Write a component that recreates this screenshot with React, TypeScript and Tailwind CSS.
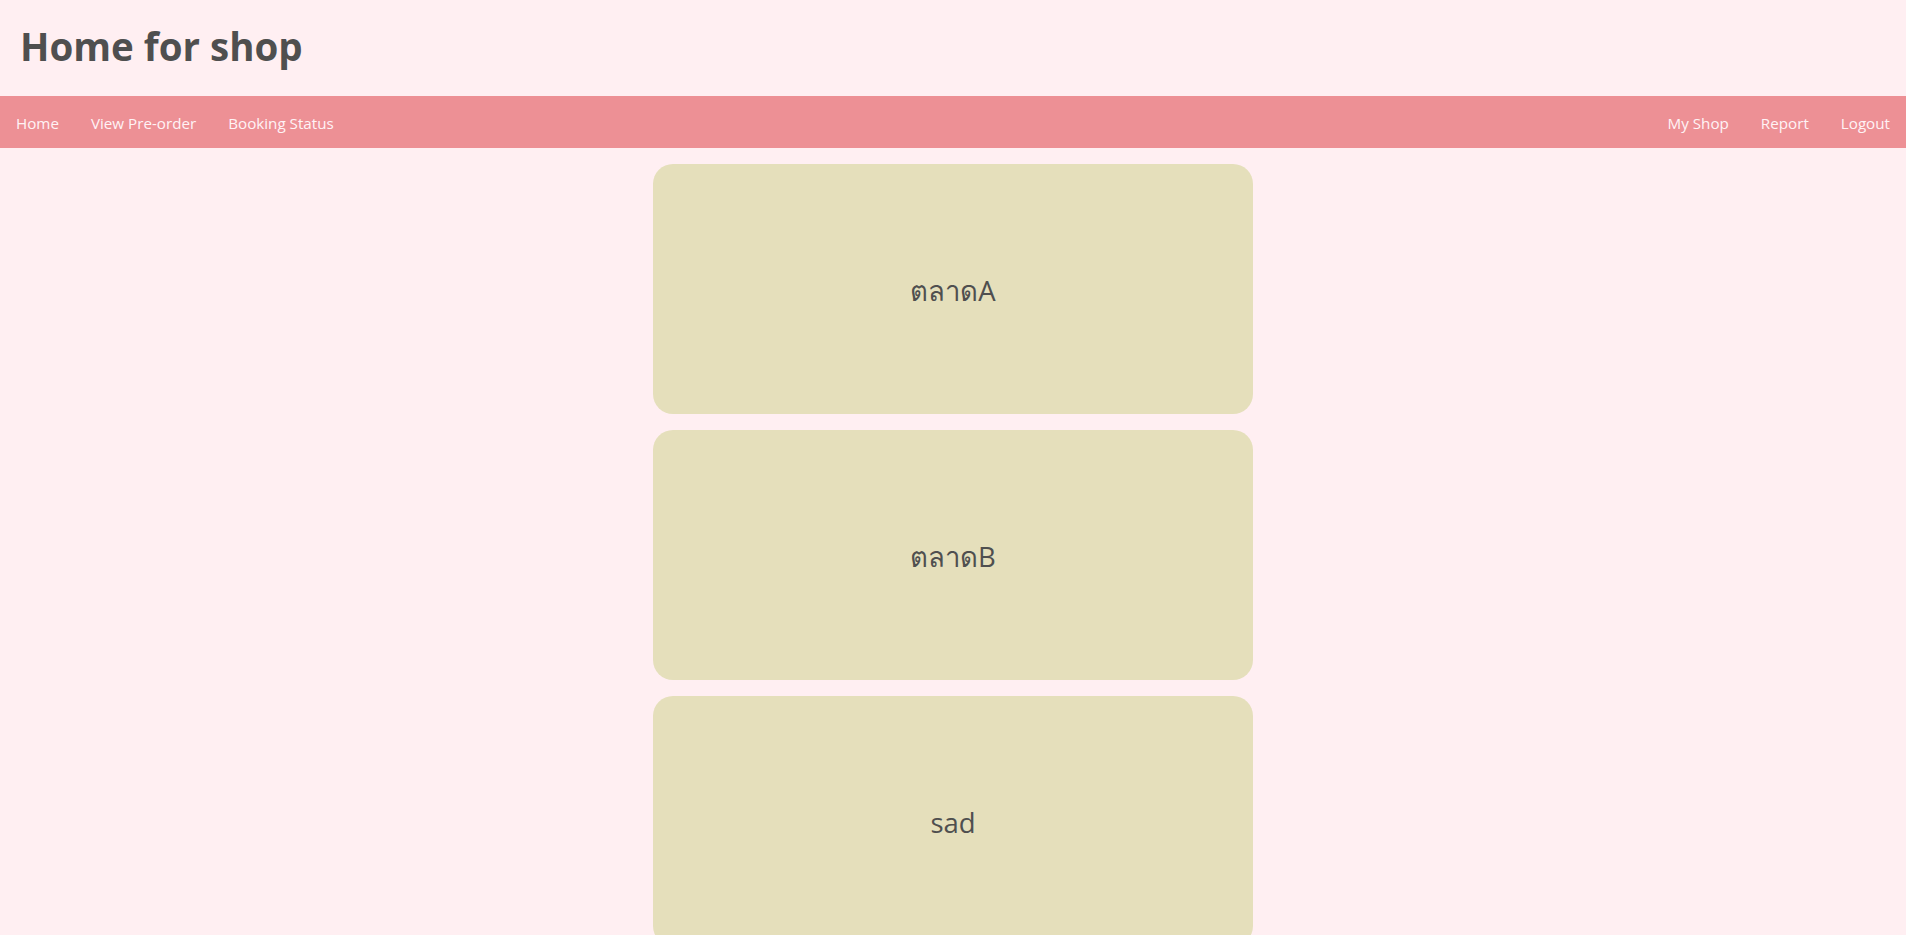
const leftLinks = ["Home", "View Pre-order", "Booking Status"];
const rightLinks = ["My Shop", "Report", "Logout"];
const markets = ["ตลาดA", "ตลาดB", "sad"];

export default function App() {
  return (
    <div className="min-h-screen bg-[#ffeff2] font-['Open_Sans','Noto_Sans',sans-serif] text-[#4f4f4f]">
      {/* Page title */}
      <header className="h-[96px] flex items-center px-5 pb-1">
        <h1 className="text-[38.5px] font-bold leading-none">Home for shop</h1>
      </header>

      {/* Top navigation */}
      <nav className="h-[52px] bg-[#ed9095] flex items-center justify-between pt-0.5 text-[15.2px] text-[#fff3f5]">
        <div className="flex">
          {leftLinks.map((link) => (
            <a key={link} href="#" className="px-4">
              {link}
            </a>
          ))}
        </div>
        <div className="flex">
          {rightLinks.map((link) => (
            <a key={link} href="#" className="px-4">
              {link}
            </a>
          ))}
        </div>
      </nav>

      {/* Market cards */}
      <main className="flex flex-col items-center gap-4 pt-4 pb-4">
        {markets.map((name) => (
          <div
            key={name}
            className="w-[600px] h-[250px] rounded-[20px] bg-[#e5dfbb] flex items-center justify-center pt-1 text-[27.5px]"
          >
            {name}
          </div>
        ))}
      </main>
    </div>
  );
}
